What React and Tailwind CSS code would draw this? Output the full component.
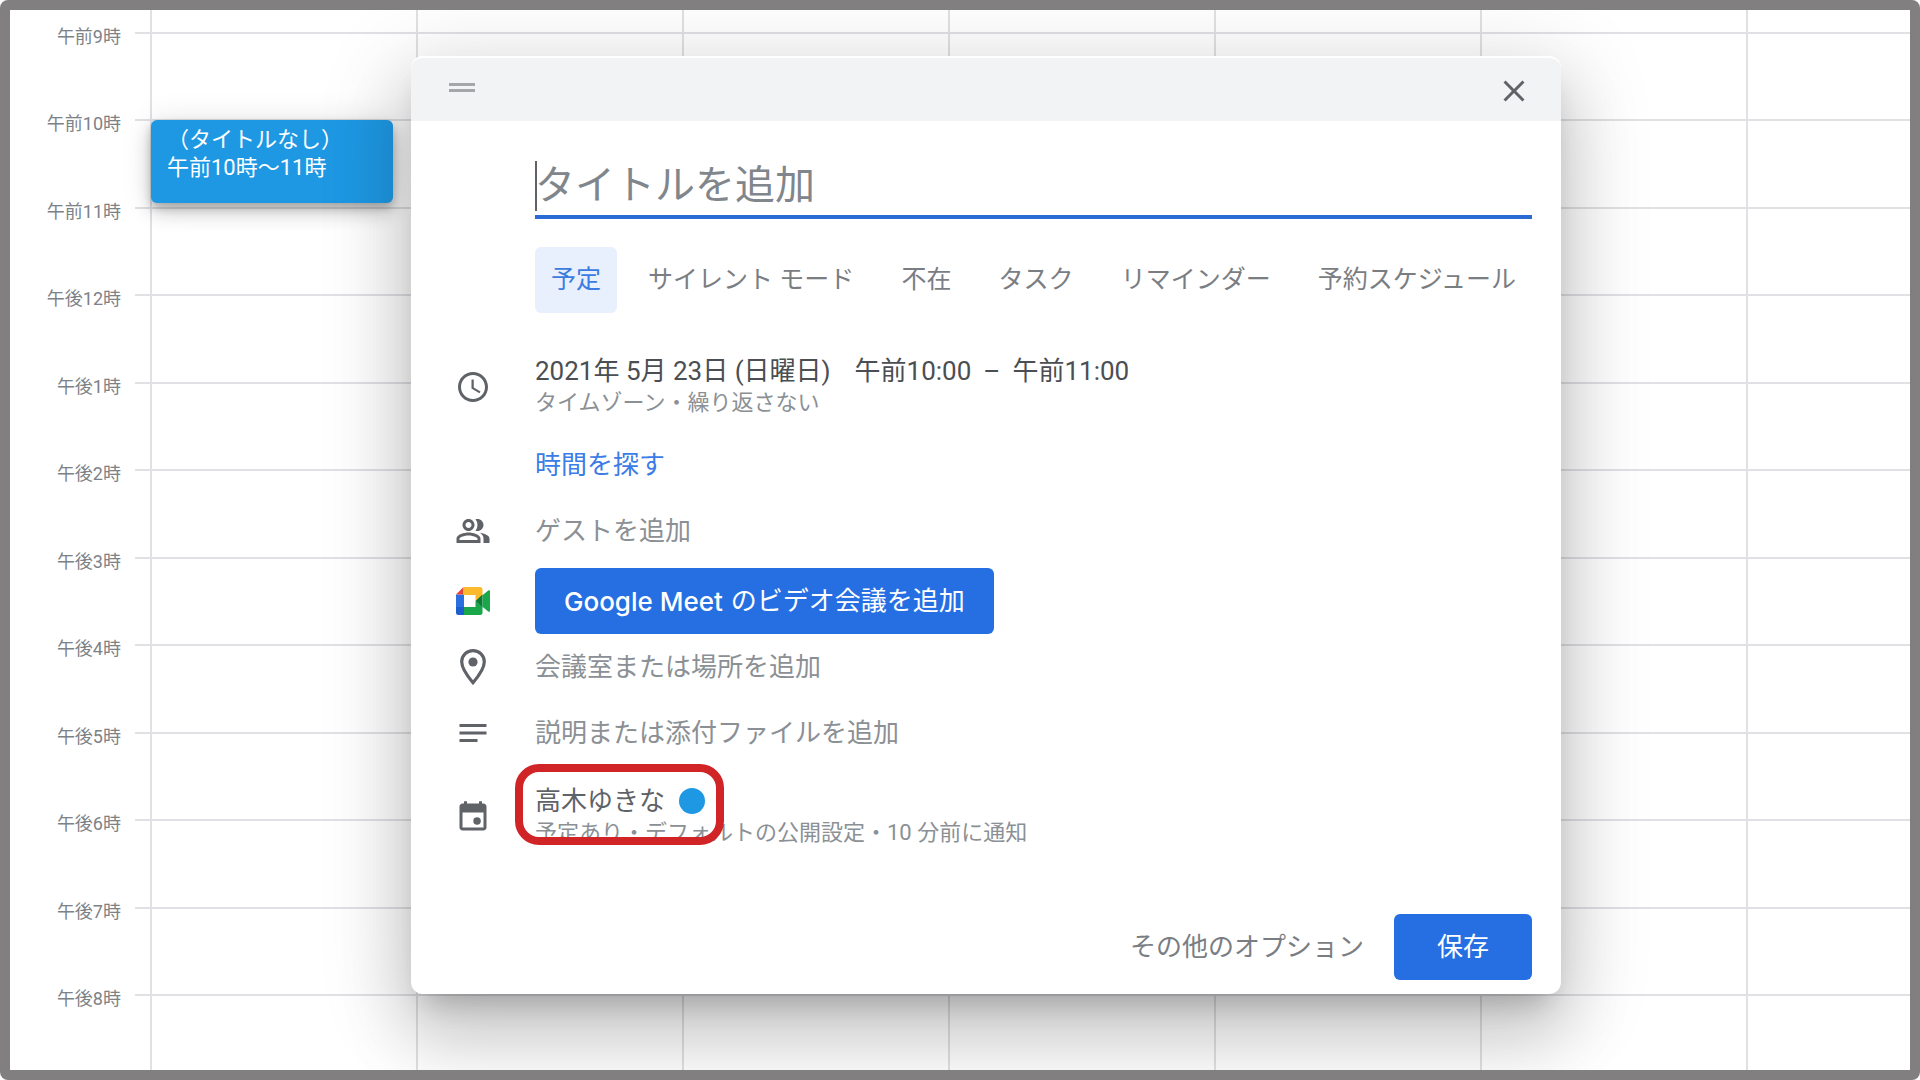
import React from "react";
import { MdClose, MdNotes, MdOutlinePeopleAlt, MdAccessTime } from "react-icons/md";

const HOURS = [
  "午前9時",
  "午前10時",
  "午前11時",
  "午後12時",
  "午後1時",
  "午後2時",
  "午後3時",
  "午後4時",
  "午後5時",
  "午後6時",
  "午後7時",
];
const LAST_HOUR = "午後8時";
const DAYS = ["sun", "mon", "tue", "wed", "thu", "fri", "sat"];
const TABS = ["予定", "サイレント モード", "不在", "タスク", "リマインダー", "予約スケジュール"];

function HourLabel({ children, className }) {
  return (
    <div className={`flex items-start ${className}`}>
      <span className="-mt-[7px] flex-1 pr-[14px] text-right text-[18px] leading-6 text-[#7d8287]">{children}</span>
      <span className="w-[15px] border-t-2 border-[#dfe1e5]" />
    </div>
  );
}

function TimeRail() {
  return (
    <div className="flex w-[140px] shrink-0 flex-col pt-[22px]">
      {HOURS.map((hour) => (
        <HourLabel key={hour} className="flex-1">
          {hour}
        </HourLabel>
      ))}
      <HourLabel className="h-[76px]">{LAST_HOUR}</HourLabel>
    </div>
  );
}

function CalendarEvent() {
  return (
    <button
      type="button"
      className="absolute -top-px right-[23px] bottom-1 -left-px z-10 flex flex-col items-start rounded-md bg-[#1e98e3] px-4 pt-[6px] text-left text-[22px] leading-7 text-white shadow-[0_5px_9px_rgba(0,0,0,0.2),0_10px_18px_rgba(0,0,0,0.14),0_2px_32px_rgba(0,0,0,0.12)]"
    >
      <span>（タイトルなし）</span>
      <span>午前10時～11時</span>
    </button>
  );
}

function DayColumn({ withEvent }) {
  return (
    <div className="flex min-w-0 flex-col border-l-2 border-[#dfe1e5] pt-[22px]">
      {HOURS.map((hour, i) => (
        <div key={hour} className="relative flex-1 border-t-2 border-[#dfe1e5]">
          {withEvent && i === 1 && <CalendarEvent />}
        </div>
      ))}
      <div className="h-[76px] border-t-2 border-[#dfe1e5]" />
    </div>
  );
}

function MeetIcon() {
  return (
    <svg width="34" height="28" viewBox="0 0 34 28" aria-hidden="true">
      <path d="M0 7.500h8v13H0z" fill="#2a6fe0" />
      <path d="M0 7.500 7.500 0v7.500z" fill="#e5443a" />
      <path d="M7.500 0H24a2.500 2.500 0 0 1 2.500 2.500V9L19.500 14V8H7.500z" fill="#fbba2d" />
      <path d="M0 20h8v8H2.500A2.500 2.500 0 0 1 0 25.500z" fill="#1b5fcc" />
      <path d="M8 20h11.500v-6l7 6v5.500A2.500 2.500 0 0 1 24 28H8z" fill="#1aa64b" />
      <path d="M19.500 14l7-6.500v13z" fill="#0d7a35" />
      <path d="M26.500 8.300 32.200 3.500c.8-.7 1.800-.2 1.800.8v19.400c0 1-1 1.500-1.800.8l-5.700-4.800z" fill="#1aa64b" />
    </svg>
  );
}

function PlaceIcon() {
  return (
    <svg width="26" height="36" viewBox="0 0 26 36" fill="none" aria-hidden="true">
      <path
        d="M13 1.700C6.700 1.700 1.700 6.600 1.700 12.800c0 7.700 8.300 17.400 11.300 20.900 3-3.500 11.300-13.200 11.300-20.900C24.300 6.600 19.300 1.700 13 1.700z"
        stroke="currentColor"
        strokeWidth="3.200"
      />
      <circle cx="13" cy="13" r="4.600" fill="currentColor" />
    </svg>
  );
}

function CalendarIcon() {
  return (
    <svg width="36" height="36" viewBox="0 0 24 24" fill="currentColor" aria-hidden="true">
      <path d="M19 3h-1V1.500h-2V3H8V1.500H6V3H5c-1.100 0-2 .9-2 2v14c0 1.100.9 2 2 2h14c1.100 0 2-.9 2-2V5c0-1.100-.9-2-2-2zm0 16H5V9h14v10z" />
      <circle cx="14.700" cy="14.700" r="2.500" />
    </svg>
  );
}

function Row({ icon, className = "", children }) {
  return (
    <div className={`grid grid-cols-[124px_minmax(0,1fr)] items-center ${className}`}>
      <div className="flex justify-center text-[#5f6368]">{icon}</div>
      <div>{children}</div>
    </div>
  );
}

function Dialog() {
  return (
    <section
      role="dialog"
      aria-label="予定の作成"
      className="absolute top-[46px] right-[349px] left-[401px] z-20 rounded-[12px] bg-white pb-[14px] shadow-[0_44px_69px_5px_rgba(0,0,0,0.14),0_16px_84px_15px_rgba(0,0,0,0.12),0_20px_27px_-13px_rgba(0,0,0,0.2)]"
    >
      <header className="flex h-[65px] items-center justify-between rounded-t-[12px] border-t-2 border-white bg-[#f1f3f4] pr-[29px] pl-[38px]">
        <div className="mb-1 flex flex-col gap-[3px]">
          <span className="h-[3px] w-[26px] bg-[#a3a7aa]" />
          <span className="h-[3px] w-[26px] bg-[#a3a7aa]" />
        </div>
        <button type="button" aria-label="閉じる" className="mt-[2px] text-[#5f6368]">
          <MdClose size={36} />
        </button>
      </header>

      <form className="pt-9 pr-[29px]" onSubmit={(e) => e.preventDefault()}>
        <div className="ml-[124px] flex items-center border-b-4 border-[#2b6cd4]">
          <span className="h-[50px] w-[2px] bg-[#5f6368]" />
          <input
            type="text"
            aria-label="タイトルを追加"
            placeholder="タイトルを追加"
            className="-ml-[2px] h-[58px] min-w-0 flex-1 bg-transparent text-[40px] outline-none placeholder:text-[#80868b]"
          />
        </div>

        <div role="tablist" className="mt-7 ml-[124px] flex justify-between text-[25px]">
          {TABS.map((tab, i) => (
            <button
              key={tab}
              type="button"
              role="tab"
              aria-selected={i === 0}
              className={`h-[66px] rounded-md px-4 whitespace-nowrap ${
                i === 0 ? "bg-[#e8f0fd] text-[#3b7ce0]" : "text-[#7a7e83]"
              }`}
            >
              {tab}
            </button>
          ))}
        </div>

        <Row icon={<MdAccessTime size={36} />} className="mt-[42px]">
          <button type="button" className="block text-left">
            <span className="flex h-8 items-center text-[26px] leading-8 whitespace-pre text-[#4b4e52]">
              <span>2021年 5月 23日 (日曜日)</span>
              <span className="ml-6">午前10:00</span>
              <span className="mx-3">–</span>
              <span>午前11:00</span>
            </span>
            <span className="block text-[22px] leading-8 text-[#8b9095]">タイムゾーン・繰り返さない</span>
          </button>
        </Row>

        <Row className="mt-[13px] h-[66px]">
          <button type="button" className="text-[26px] text-[#3b7ce6]">
            時間を探す
          </button>
        </Row>

        <Row icon={<MdOutlinePeopleAlt size={36} />} className="h-[66px]">
          <button type="button" className="text-[26px] text-[#8b9095]">
            ゲストを追加
          </button>
        </Row>

        <Row icon={<MeetIcon />} className="mt-1">
          <button
            type="button"
            className="flex h-[66px] items-center gap-2 rounded-md bg-[#256fe2] px-[29px] text-[26px] whitespace-nowrap text-white"
          >
            <span className="font-['Inter'] font-medium">Google Meet</span>
            <span>のビデオ会議を追加</span>
          </button>
        </Row>

        <Row icon={<PlaceIcon />} className="h-[66px]">
          <button type="button" className="text-[26px] text-[#8b9095]">
            会議室または場所を追加
          </button>
        </Row>

        <Row icon={<MdNotes size={36} />} className="h-[66px]">
          <button type="button" className="text-[26px] text-[#8b9095]">
            説明または添付ファイルを追加
          </button>
        </Row>

        <Row icon={<CalendarIcon />} className="mt-[19px]">
          <button type="button" className="relative block text-left">
            <span className="flex h-8 items-center gap-[14px] text-[26px] leading-8 text-[#5f6368]">
              高木ゆきな
              <span className="h-[26px] w-[26px] rounded-full bg-[#1e98e3]" />
            </span>
            <span className="block text-[22px] leading-8 whitespace-nowrap text-[#8b9095]">
              予定あり・デフォルトの公開設定・10 分前に通知
            </span>
            <span className="absolute -top-[21px] -left-5 h-[81px] w-[209px] rounded-[24px] border-8 border-[#d02427]" />
          </button>
        </Row>

        <div className="mt-[65px] flex items-center justify-end gap-[14px]">
          <button type="button" className="h-[66px] px-4 text-[26px] text-[#7a7e83]">
            その他のオプション
          </button>
          <button type="submit" className="h-[66px] rounded-md bg-[#256fe2] px-[43px] text-[26px] text-white">
            保存
          </button>
        </div>
      </form>
    </section>
  );
}

export default function App() {
  return (
    <main
      lang="ja"
      className="relative flex h-screen overflow-hidden rounded-lg border-[10px] border-[#827f80] bg-white font-['Roboto','Noto_Sans_CJK_JP',sans-serif]"
    >
      <TimeRail />
      <div className="grid flex-1 grid-cols-[repeat(6,266fr)_164fr]">
        {DAYS.map((day, i) => (
          <DayColumn key={day} withEvent={i === 0} />
        ))}
      </div>
      <Dialog />
    </main>
  );
}
